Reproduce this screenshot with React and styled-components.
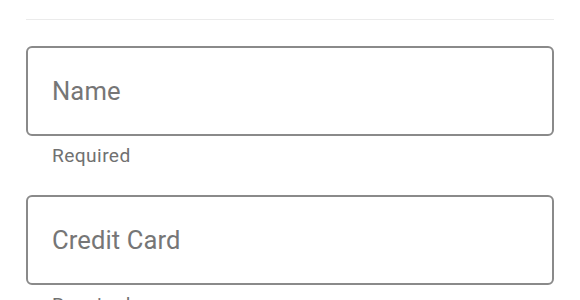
import React from 'react';
import styled, { createGlobalStyle } from 'styled-components';

const GlobalStyle = createGlobalStyle`
  html, body {
    margin: 0;
    padding: 0;
    background: #ffffff;
    font-family: Roboto, "Liberation Sans", sans-serif;
  }
`;

const Form = styled.div`
  padding: 19px 26px 0;
  display: flex;
  flex-direction: column;
`;

const Divider = styled.div`
  height: 1px;
  background: #ebebeb;
  margin-bottom: 26px;
`;

const Field = styled.div`
  display: flex;
  flex-direction: column;
  margin-bottom: ${(p) => p.$gap}px;
`;

const Box = styled.div`
  box-sizing: border-box;
  height: 90px;
  border: 2px solid #8a8a8a;
  border-radius: 6px;
  display: flex;
  align-items: center;
  padding-left: 24px;
`;

const Label = styled.span`
  font-size: 25.6px;
  color: #767676;
  letter-spacing: 0.1px;
`;

const Helper = styled.div`
  margin-top: 4px;
  padding-left: 26px;
  font-size: 19.2px;
  line-height: 32px;
  color: #717171;
  letter-spacing: 0.4px;
`;

const fields = ['Name', 'Credit Card'];

export default function App() {
  return (
    <>
      <GlobalStyle />
      <Form>
        <Divider />
        {fields.map((f) => (
          <Field key={f} $gap={23}>
            <Box>
              <Label>{f}</Label>
            </Box>
            <Helper>Required</Helper>
          </Field>
        ))}
      </Form>
    </>
  );
}
